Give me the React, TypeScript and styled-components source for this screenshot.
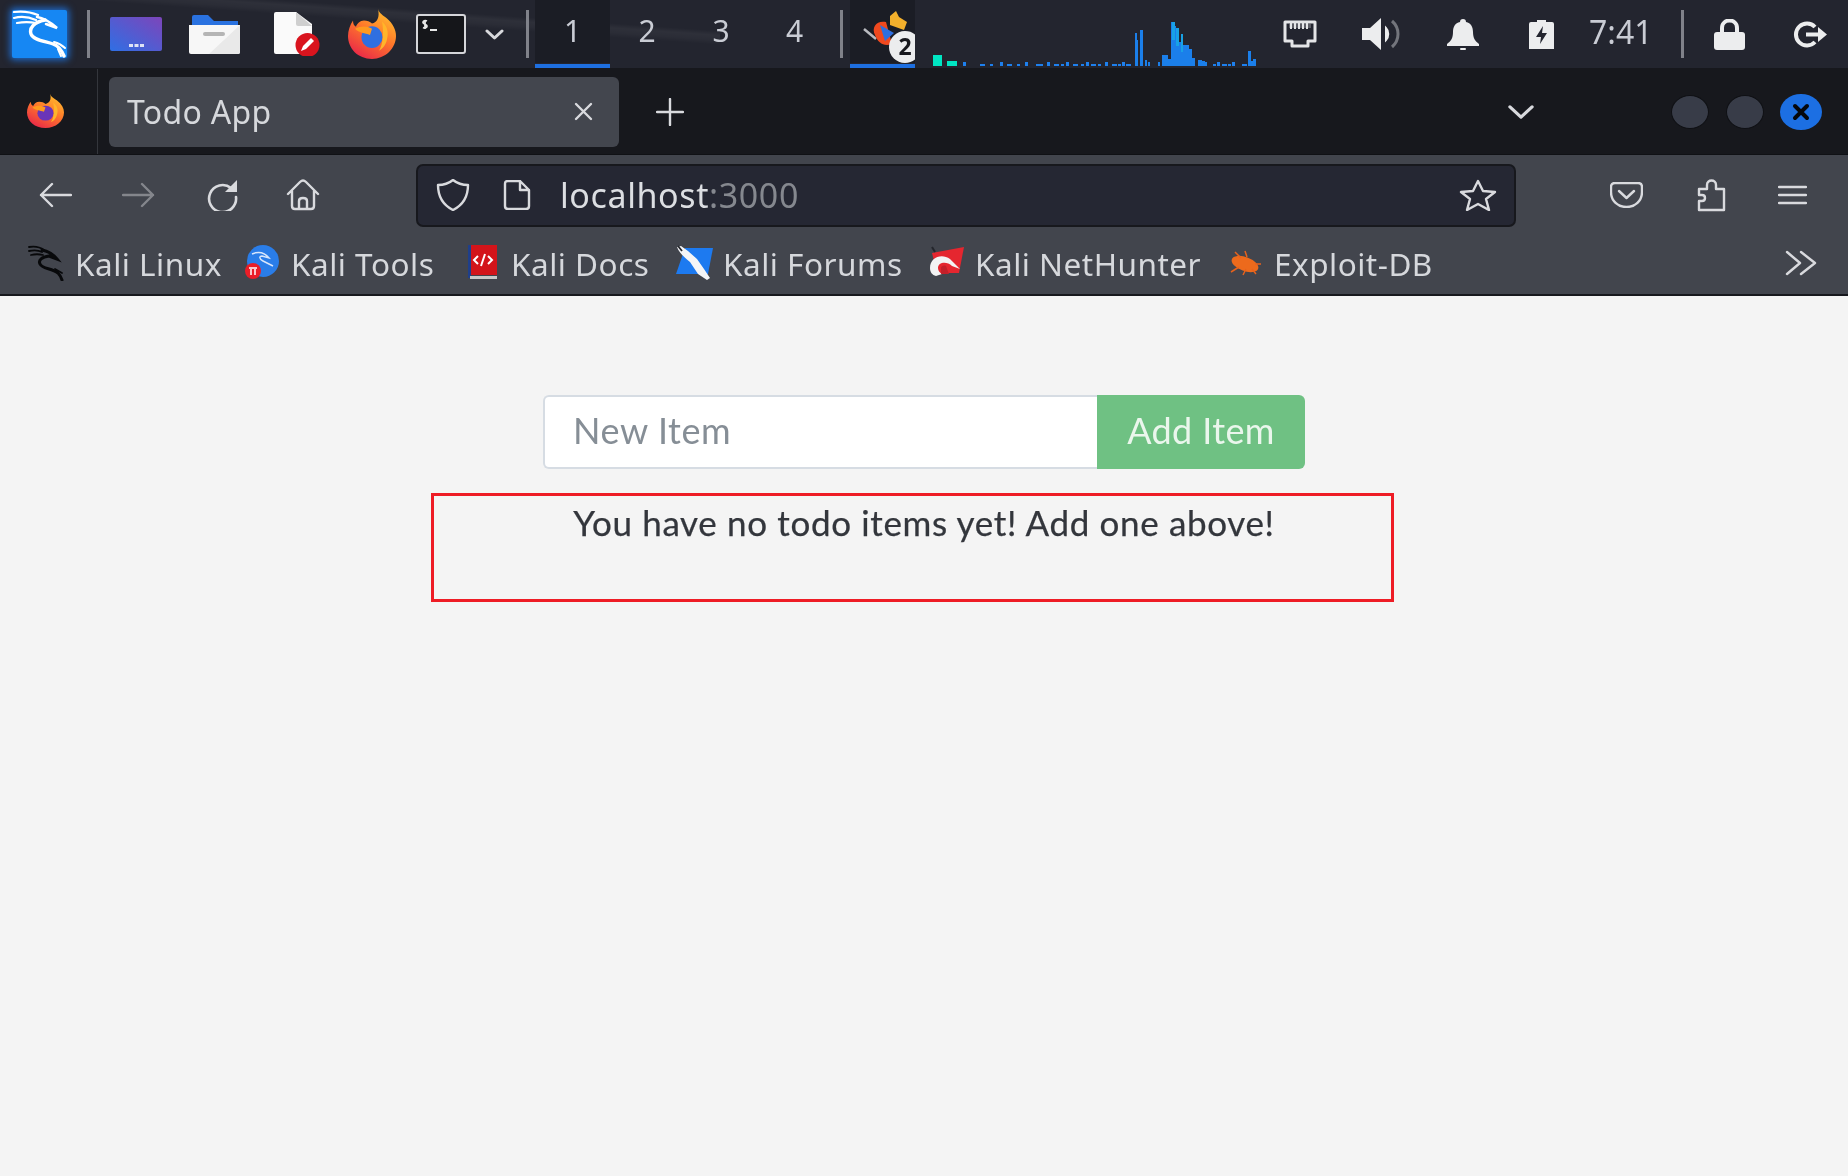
import React from "react";
import styled, { createGlobalStyle } from "styled-components";

const Global = createGlobalStyle`
  html, body { margin: 0; padding: 0; background: #f4f4f4; }
  * { box-sizing: border-box; }
`;

const Screen = styled.div`
  width: 1848px;
  height: 1176px;
  display: flex;
  flex-direction: column;
  overflow: hidden;
  font-family: "Noto Sans", sans-serif;
  filter: blur(0.45px);
`;

const Taskbar = styled.header`
  height: 69px;
  flex: none;
  display: flex;
  align-items: center;
  border-bottom: 1px solid #17181d;
  background:
    linear-gradient(4deg, transparent 62%, rgba(255, 255, 255, 0.035) 66%, rgba(255, 255, 255, 0.05) 70%, transparent 74%) 0 0 / 720px 100% no-repeat,
    #23252f;
`;

const Slot = styled.div<{ $ml?: number; $w: number; $h?: number }>`
  flex: none;
  margin-left: ${(p) => p.$ml ?? 0}px;
  width: ${(p) => p.$w}px;
  height: ${(p) => (p.$h ? `${p.$h}px` : "auto")};
  display: flex;
  align-items: center;
  justify-content: center;
  svg { display: block; flex: none; }
`;

const Divider = styled.div<{ $ml: number }>`
  flex: none;
  margin-left: ${(p) => p.$ml}px;
  width: 3px;
  height: 48px;
  background: #80828a;
`;

const Workspace = styled.div<{ $active?: boolean; $w: number }>`
  flex: none;
  width: ${(p) => p.$w}px;
  height: 68px;
  display: flex;
  align-items: center;
  justify-content: center;
  padding-bottom: 4px;
  font-size: 30px;
  color: #c9ccd4;
  background: ${(p) => (p.$active ? "#1b1d25" : "transparent")};
  border-bottom: 4px solid ${(p) => (p.$active ? "#1e6fe0" : "transparent")};
  box-shadow: inset 0 -1px 0 #23252f;
`;

const TaskButton = styled(Workspace)`
  margin-left: 7px;
  padding: 0;
  align-items: flex-start;
  justify-content: flex-start;
  overflow: hidden;
`;

const Clock = styled.div`
  flex: none;
  margin-left: 35px;
  width: 66px;
  margin-top: -5px;
  font-size: 32px;
  color: #c9ccd4;
  white-space: nowrap;
`;

const TabStrip = styled.div`
  height: 86px;
  flex: none;
  display: flex;
  align-items: center;
  background: #17181d;
  border-bottom: 1px solid #101115;
`;

const StripLogo = styled.div`
  flex: none;
  width: 98px;
  height: 100%;
  padding-left: 27px;
  display: flex;
  align-items: center;
  border-right: 1px solid #34363c;
  svg { margin-top: -2px; }
`;

const Tab = styled.div`
  flex: none;
  margin-left: 11px;
  width: 510px;
  height: 70px;
  padding: 0 26px 0 18px;
  display: flex;
  align-items: center;
  justify-content: space-between;
  border-radius: 6px;
  background: #43464e;
`;

const TabTitle = styled.span`
  font-size: 32px;
  letter-spacing: 0.3px;
  color: #d6d8dc;
`;

const WindowDot = styled.div<{ $ml: number; $close?: boolean }>`
  flex: none;
  margin-left: ${(p) => p.$ml}px;
  width: ${(p) => (p.$close ? 42 : 38)}px;
  height: ${(p) => (p.$close ? 36 : 34)}px;
  border-radius: 50%;
  display: flex;
  align-items: center;
  justify-content: center;
  background: ${(p) => (p.$close ? "#1c6fe3" : "#383c48")};
  border: ${(p) => (p.$close ? "none" : "1px solid #0f1014")};
`;

const Toolbar = styled.nav`
  height: 80px;
  flex: none;
  display: flex;
  align-items: center;
  background: #42454d;
`;

const UrlBar = styled.div`
  flex: none;
  margin-left: 96px;
  width: 1100px;
  height: 63px;
  display: flex;
  align-items: center;
  border: 2px solid #17181d;
  border-radius: 7px;
  background: #252733;
`;

const UrlText = styled.span`
  flex: none;
  margin-left: 29px;
  width: 238px;
  font-size: 34px;
  letter-spacing: 0.6px;
  color: #dcdee2;
  white-space: nowrap;
`;

const UrlPort = styled.span`
  color: #85888f;
`;

const Bookmarks = styled.div`
  height: 61px;
  flex: none;
  display: flex;
  align-items: center;
  padding-bottom: 3px;
  background: #42454d;
  border-bottom: 2px solid #17181d;
`;

const BookmarkLabel = styled.span<{ $ml: number; $w: number }>`
  flex: none;
  margin-left: ${(p) => p.$ml}px;
  width: ${(p) => p.$w}px;
  font-size: 31.5px;
  letter-spacing: 0.5px;
  color: #d6d8dc;
  white-space: nowrap;
`;

const Page = styled.main`
  position: relative;
  flex: 1;
  display: flex;
  flex-direction: column;
  align-items: center;
  padding-top: 99px;
  background: #f4f4f4;
  font-family: Lato, sans-serif;
`;

const AddForm = styled.form`
  width: 762px;
  height: 74px;
  display: flex;
`;

const ItemInput = styled.input`
  flex: 1;
  min-width: 0;
  padding: 0 28px 4px;
  border: 2px solid #d6dce3;
  border-right: none;
  border-radius: 6px 0 0 6px;
  background: #fff;
  font: 400 36px Lato, sans-serif;
  letter-spacing: 0.6px;
  outline: none;
  &::placeholder { color: #868e96; opacity: 1; }
`;

const AddButton = styled.button`
  flex: none;
  width: 208px;
  padding: 0 0 4px;
  border: none;
  border-radius: 0 6px 6px 0;
  background: #6fc183;
  color: #eaf6ec;
  font: 400 36px Lato, sans-serif;
  letter-spacing: 0.4px;
`;

const EmptyMessage = styled.p`
  margin: 30px 0 0;
  font-size: 35px;
  line-height: 46px;
  letter-spacing: 0.65px;
  color: #33363c;
  text-align: center;
  -webkit-text-stroke: 0.25px #33363c;
`;

const Annotation = styled.div`
  position: absolute;
  left: 431px;
  top: 197px;
  width: 963px;
  height: 109px;
  border: 3px solid #ee1c25;
  pointer-events: none;
`;

const Firefox = ({ w, h, core = "#2f6fe0" }: { w: number; h: number; core?: string }) => (
  <svg width={w} height={h} viewBox="0 0 48 48" preserveAspectRatio="none">
    <defs>
      <linearGradient id={`fx${core.slice(1)}`} x1="0.8" y1="0" x2="0.2" y2="1">
        <stop offset="0" stopColor="#ffc22e" />
        <stop offset="0.45" stopColor="#ff7a2a" />
        <stop offset="1" stopColor="#e8234a" />
      </linearGradient>
    </defs>
    <path
      d="M30 0c1 4 5 6 9 9 6 5 9 11 9 17 0 12-11 22-24 22C10 48 0 38 0 26c0-5 2-11 5-15 0 3 1 5 3 6 1-3 4-6 8-6 3 0 6 1 8 3 5-1 8-6 6-14z"
      fill={`url(#fx${core.slice(1)})`}
    />
    <circle cx="24" cy="27" r="10.5" fill={core} />
    <path d="M7 19c6-3 12-3 17 0l-2 6c-5-2-11-2-15-6z" fill="#ff9a1f" />
    <path d="M34 12c5 4 7 10 5 17-1 5-4 9-8 11 4-6 5-18 3-28z" fill="#ffb52a" />
  </svg>
);

const Glow = styled.div`
  width: 55px;
  height: 48px;
  background: #1687f3;
  box-shadow: 0 0 7px 2px rgba(30, 130, 255, 0.75);
  border-radius: 2px;
  svg { display: block; }
`;

const KaliLogo = () => (
  <Glow>
    <svg width="55" height="48" viewBox="0 0 55 48" fill="none" stroke="#fff" strokeLinecap="round">
      <path d="M2 2c8-1 17 0 24 3M2 8c7-2 15-1 22 2M5 13c6-1 13-1 19 0" strokeWidth="2.200" />
      <path d="M25 7c7 1 12 4 20 11l-11-4" strokeWidth="2.600" />
      <path d="M33 10C22 12 17 18 19 24c2 6 13 7 22 10 6 2 9 7 11 12" strokeWidth="3.400" />
      <path d="M42 32c4 1 8 3 11 6M46 39l3 7" strokeWidth="2" />
    </svg>
  </Glow>
);

const AppTile = () => (
  <svg width="52" height="34" viewBox="0 0 52 34">
    <defs>
      <linearGradient id="tile" x1="0" y1="1" x2="1" y2="0">
        <stop offset="0" stopColor="#2f6fe4" />
        <stop offset="1" stopColor="#7d45ba" />
      </linearGradient>
    </defs>
    <rect width="52" height="34" rx="2" fill="url(#tile)" />
    <rect x="19" y="27" width="4" height="3" fill="#dfe3f5" />
    <rect x="24.5" y="27" width="4" height="3" fill="#dfe3f5" />
    <rect x="30" y="27" width="4" height="3" fill="#dfe3f5" />
  </svg>
);

const Folder = () => (
  <svg width="51" height="39" viewBox="0 0 51 39">
    <path d="M3 10V2q0-2 2-2h14l6 6h24v5z" fill="#2a72e0" />
    <path d="M0 10h51v27q0 2-2 2H2q-2 0-2-2z" fill="#f7f7f7" />
    <path d="M20 39 51 10v27q0 2-2 2z" fill="#e9e9e9" />
    <rect x="14" y="17" width="22" height="4" rx="2" fill="#b5b5b5" />
  </svg>
);

const Doc = () => (
  <svg width="47" height="44" viewBox="0 0 47 44">
    <path d="M0 2q0-2 2-2h20l16 12v30H2q-2 0-2-2z" fill="#fafafa" />
    <path d="M22 0l16 14H24q-2 0-2-2z" fill="#cfcfcf" />
    <circle cx="33.5" cy="33" r="12" fill="#d9141e" />
    <path d="M27 39l2-5 8-8 3 3-8 8z" fill="#fff" />
  </svg>
);

const Terminal = () => (
  <svg width="50" height="40" viewBox="0 0 50 40">
    <rect x="1" y="1" width="48" height="38" rx="2" fill="#15161a" stroke="#d5d6da" strokeWidth="2" />
    <path d="M11 7c-2-1-4 0-4 1.500S11 10.500 11 12s-2 2.500-4 1.500M9 6v9" fill="none" stroke="#e8e8e8" strokeWidth="1.800" />
    <rect x="14" y="15" width="7" height="2" fill="#e8e8e8" />
  </svg>
);

const Chevron = ({ w = 19, h = 11, c = "#d8d9dd", sw = 3 }: { w?: number; h?: number; c?: string; sw?: number }) => (
  <svg width={w} height={h} viewBox="0 0 19 11" fill="none" stroke={c} strokeWidth={sw} strokeLinecap="round" strokeLinejoin="round" preserveAspectRatio="none">
    <path d="M2 2l7.500 7L17 2" />
  </svg>
);

const bars: [number, number, number][] = [
  [1135, 33, 2], [1137, 40, 1], [1140, 30, 3], [1145, 60, 2], [1148, 62, 2], [1158, 62, 2], [1162, 55, 6], [1168, 59, 3],
  [1171, 22, 3], [1174, 26, 2], [1176, 28, 3], [1179, 42, 2], [1181, 34, 2], [1183, 45, 3], [1186, 45, 3], [1189, 49, 3],
  [1192, 58, 3], [1198, 60, 4], [1202, 61, 3], [1205, 62, 2], [1248, 51, 3], [1251, 61, 2], [1253, 59, 3],
];
const specks = [963, 980, 990, 1000, 1007, 1017, 1025, 1036, 1040, 1047, 1054, 1061, 1066, 1073, 1081, 1086, 1091, 1098, 1105, 1112, 1118, 1122, 1126, 1213, 1217, 1222, 1228, 1232, 1242];

const LoadGraph = () => (
  <svg width="330" height="68" viewBox="930 0 330 68">
    <rect x="933" y="55" width="9" height="11" fill="#00e6c3" />
    <rect x="947" y="61" width="10" height="5" fill="#00e6c3" />
    {specks.map((x, i) => (
      <rect key={x} x={x} y={i % 3 === 0 ? 62 : 64} width={i % 3 === 1 ? 5 : 3} height={i % 3 === 0 ? 4 : 2} fill="#1e80ee" />
    ))}
    {bars.map(([x, y, w]) => (
      <rect key={x} x={x} y={y} width={w} height={66 - y} fill="#1b7fea" />
    ))}
    {[[1172, 22, 3], [1176, 28, 3], [1181, 34, 2]].map(([x, y, w]) => (
      <rect key={x} x={x} y={y} width={w} height={18} fill="#18a2e6" />
    ))}
  </svg>
);

const TaskIcon = () => (
  <svg width="65" height="64" viewBox="0 0 65 64">
    <path d="M14 29l12 10" stroke="#b9bbc0" strokeWidth="2.500" />
    <path d="M36 22c-9-2-15 5-11 13 3 8 9 12 17 9z" fill="#f0491f" />
    <path d="M30 25l14 8-9 8z" fill="#2f6fe0" />
    <path d="M40 16l6-5 3 6 8 5-3 8-14-5z" fill="#f3b02c" />
    <circle cx="55" cy="47" r="16" fill="#ecedee" />
    <text x="55" y="55" textAnchor="middle" fontFamily="Noto Sans, sans-serif" fontWeight="700" fontSize="23" fill="#17181d">2</text>
  </svg>
);

const Network = () => (
  <svg width="34" height="28" viewBox="0 0 34 28" fill="none" stroke="#e4e5e7">
    <path d="M2 2h30v19h-7v5H9v-5H2z" strokeWidth="3" strokeLinejoin="round" />
    <path d="M8 3v6M12 3v6M16 3v6M20 3v6M24 3v6" strokeWidth="2" />
    <path d="M6 4h22v4H6z" fill="#e4e5e7" stroke="none" opacity="0.3" />
  </svg>
);

const Volume = () => (
  <svg width="40" height="32" viewBox="0 0 40 32">
    <path d="M0 10h8L19 0v32L8 22H0z" fill="#ecedee" />
    <path d="M24 10c3 3 3 9 0 12z" fill="#ecedee" stroke="#ecedee" strokeWidth="2" />
    <path d="M30 3c8 7 8 19 0 26" fill="none" stroke="#73757c" strokeWidth="3" />
  </svg>
);

const Bell = () => (
  <svg width="32" height="31" viewBox="0 0 32 31" fill="#ecedee">
    <path d="M16 0c2 0 3 1 3 3 5 1 7 5 7 10 0 6 2 9 6 12v2H0v-2c4-3 6-6 6-12C6 8 8 4 13 3c0-2 1-3 3-3z" />
    <rect x="13" y="29" width="6" height="2" rx="1" />
  </svg>
);

const Battery = () => (
  <svg width="25" height="29" viewBox="0 0 25 29">
    <path d="M8 0h9v2h6q2 0 2 2v25H0V4q0-2 2-2h6z" fill="#ecedee" />
    <path d="M14 6l-7 11h5l-1 7 7-11h-5z" fill="#23252f" />
  </svg>
);

const Lock = () => (
  <svg width="31" height="31" viewBox="0 0 31 31" fill="none">
    <path d="M8 14V9c0-10 15-10 15 0v5" stroke="#ecedee" strokeWidth="4" />
    <rect y="13" width="31" height="18" rx="3" fill="#ecedee" />
  </svg>
);

const Power = () => (
  <svg width="35" height="27" viewBox="0 0 35 27" fill="none" stroke="#ecedee" strokeWidth="4">
    <path d="M22 6a11 11 0 1 0 0 15" />
    <path d="M13 13.500h15" />
    <path d="M25 6l9 7.500-9 7.500z" fill="#ecedee" stroke="none" />
  </svg>
);

const Line = ({ w, h, vb, d, c = "#d9dade", sw = 2.4 }: { w: number; h: number; vb: string; d: string; c?: string; sw?: number }) => (
  <svg width={w} height={h} viewBox={vb} fill="none" stroke={c} strokeWidth={sw} strokeLinecap="round" strokeLinejoin="round">
    <path d={d} />
  </svg>
);

const Reload = () => (
  <svg width="33" height="32" viewBox="0 0 33 32" fill="none" stroke="#d9dade" strokeWidth="2.600" strokeLinecap="round">
    <path d="M26 9A13.500 13.500 0 1 0 31 18" />
    <path d="M32 1v12H20z" fill="#d9dade" stroke="none" />
  </svg>
);

const BmDragon = () => (
  <svg width="36" height="36" viewBox="0 0 36 36" fill="none" stroke="#08090b" strokeLinecap="round">
    <path d="M1 2c6-1 11 0 15 3M1 6c5-1 9-1 13 1M3 10c4-1 8-1 12 0" strokeWidth="1.800" />
    <path d="M14 5c5 1 10 3 15 9l-8-3C14 12 10 15 12 19c2 5 12 4 18 9 2 2 3 4 4 7" strokeWidth="3" />
    <path d="M27 24l7 4" strokeWidth="1.800" />
  </svg>
);

const BmTools = () => (
  <svg width="34" height="36" viewBox="0 0 34 36">
    <circle cx="18" cy="16" r="16" fill="#2a7de8" />
    <path d="M7 9c7-3 13-1 17 4l-7-2c-3 0-3 3 1 5l10 5" fill="none" stroke="#d8e6fb" strokeWidth="1.500" />
    <circle cx="8" cy="26" r="8" fill="#ea1d27" />
    <path d="M4 23h8M6 24v6M10 24v6" stroke="#fff" strokeWidth="1.500" />
  </svg>
);

const BmDocs = () => (
  <svg width="29" height="36" viewBox="0 0 29 36">
    <rect x="2" y="0" width="27" height="30" fill="#d3141a" />
    <rect x="0" y="0" width="3" height="33" fill="#1f3f8a" />
    <rect x="2" y="31" width="27" height="3" fill="#c8c8c8" />
    <path d="M10 11l-4 4 4 4M20 11l4 4-4 4M17 9l-4 12" fill="none" stroke="#fff" strokeWidth="2" />
  </svg>
);

const BmForums = () => (
  <svg width="37" height="36" viewBox="0 0 37 36">
    <path d="M9 3h28l-5 26H0z" fill="#1d7af0" />
    <path d="M1 2l4-1 7 5 9 8 7 10 6 9-3 2-9-6-8-12C9 13 3 8 1 2z" fill="#f4f5f7" />
    <path d="M2 1l4 5" stroke="#24262c" strokeWidth="1.800" />
  </svg>
);

const BmHunter = () => (
  <svg width="36" height="34" viewBox="0 0 36 34">
    <path d="M4 7l32-6-5 26H9z" fill="#e5262f" />
    <path d="M2 22C2 11 14 7 22 13l10 10-8-3c-5-5-14-4-14 2 0 3 2 5 4 6l-6 2c-4-1-6-4-6-8z" fill="#f3f3f3" />
    <path d="M13 22c0-2 3-3 5-2l3 8h-8z" fill="#c3202a" />
    <path d="M4 1l3 5" stroke="#24262c" strokeWidth="2" />
  </svg>
);

const BmBug = () => (
  <svg width="36" height="26" viewBox="0 0 36 26" fill="none" stroke="#e8621c" strokeWidth="1.500">
    <ellipse cx="18" cy="14" rx="14" ry="7" transform="rotate(20 18 14)" fill="#ed6a1c" stroke="none" />
    <path d="M8 2l6 6M18 1l2 6M4 22l8-5M16 25l3-6M29 24l-4-5M34 14h-6" />
  </svg>
);

export default function App() {
  return (
    <>
      <Global />
      <Screen>
        <Taskbar>
          <Slot $ml={12} $w={55}><KaliLogo /></Slot>
          <Divider $ml={20} />
          <Slot $ml={20} $w={52}><AppTile /></Slot>
          <Slot $ml={27} $w={51}><Folder /></Slot>
          <Slot $ml={34} $w={47}><Doc /></Slot>
          <Slot $ml={27} $w={48}><Firefox w={48} h={50} /></Slot>
          <Slot $ml={20} $w={50}><Terminal /></Slot>
          <Slot $ml={19} $w={19}><Chevron /></Slot>
          <Divider $ml={22} />
          <Slot $ml={6} $w={75}><Workspace $active $w={75}>1</Workspace></Slot>
          <Workspace $w={74}>2</Workspace>
          <Workspace $w={74}>3</Workspace>
          <Workspace $w={73}>4</Workspace>
          <Divider $ml={9} />
          <TaskButton $active $w={65}><TaskIcon /></TaskButton>
          <Slot $ml={15} $w={330}><LoadGraph /></Slot>
          <Slot $ml={23} $w={34}><Network /></Slot>
          <Slot $ml={45} $w={40}><Volume /></Slot>
          <Slot $ml={45} $w={32}><Bell /></Slot>
          <Slot $ml={50} $w={25}><Battery /></Slot>
          <Clock>7:41</Clock>
          <Divider $ml={26} />
          <Slot $ml={30} $w={31}><Lock /></Slot>
          <Slot $ml={48} $w={35}><Power /></Slot>
        </Taskbar>

        <TabStrip>
          <StripLogo><Firefox w={37} h={34} core="#6a35b8" /></StripLogo>
          <Tab>
            <TabTitle>Todo App</TabTitle>
            <Line w={19} h={19} vb="0 0 19 19" d="M2 2l15 15M17 2L2 17" />
          </Tab>
          <Slot $ml={37} $w={28}><Line w={28} h={28} vb="0 0 28 28" d="M14 1v26M1 14h26" /></Slot>
          <Slot $ml={823} $w={28}><Chevron w={28} h={16} sw={2.200} /></Slot>
          <WindowDot $ml={136} />
          <WindowDot $ml={17} />
          <WindowDot $ml={16} $close>
            <Line w={18} h={18} vb="0 0 18 18" d="M3 3l12 12M15 3L3 15" c="#05070c" sw={4} />
          </WindowDot>
        </TabStrip>

        <Toolbar>
          <Slot $ml={39} $w={33}><Line w={33} h={26} vb="0 0 33 26" d="M32 13H2M13 2L2 13l11 11" /></Slot>
          <Slot $ml={50} $w={33}><Line w={33} h={26} vb="0 0 33 26" d="M1 13h30M20 2l11 11-11 11" c="#84868c" /></Slot>
          <Slot $ml={50} $w={33}><Reload /></Slot>
          <Slot $ml={48} $w={34}><Line w={34} h={32} vb="0 0 34 32" d="M2 15L14 3q3-3 6 0l12 12M6 12v15q0 3 3 3h16q3 0 3-3V12M13 30v-8q0-3 4-3t4 3v8" /></Slot>
          <UrlBar>
            <Slot $ml={18} $w={34}><Line w={34} h={32} vb="0 0 34 32" d="M17 1C12 5 7 6 2 6c0 12 5 20 15 25 10-5 15-13 15-25-5 0-10-1-15-5z" /></Slot>
            <Slot $ml={33} $w={28}><Line w={28} h={30} vb="0 0 28 30" d="M17 1H5Q2 1 2 4v22q0 3 3 3h18q3 0 3-3V10zM17 1v9h9" /></Slot>
            <UrlText>localhost<UrlPort>:3000</UrlPort></UrlText>
            <Slot $ml={661} $w={38}><Line w={38} h={32} vb="0 0 38 32" d="M19 2l5 10 12 1-9 7 3 11-11-6-11 6 3-11-9-7 12-1z" /></Slot>
          </UrlBar>
          <Slot $ml={94} $w={33}><Line w={33} h={26} vb="0 0 33 26" d="M5 1h23q4 0 4 4v5c0 9-7 15-15.500 15S1 19 1 10V5q0-4 4-4zM9 9l7.500 7L24 9" /></Slot>
          <Slot $ml={52} $w={31}><Line w={31} h={33} vb="0 0 31 33" d="M12 10V6c0-6 9-6 9 0v4h8v21H4v-9h3c4 0 4-6 0-6H4v-6z" /></Slot>
          <Slot $ml={52} $w={29}><Line w={29} h={20} vb="0 0 29 20" d="M1 2h27M1 10h27M1 18h27" /></Slot>
        </Toolbar>

        <Bookmarks>
          <Slot $ml={28} $w={36}><BmDragon /></Slot>
          <BookmarkLabel $ml={11} $w={141}>Kali Linux</BookmarkLabel>
          <Slot $ml={29} $w={34}><BmTools /></Slot>
          <BookmarkLabel $ml={12} $w={145}>Kali Tools</BookmarkLabel>
          <Slot $ml={32} $w={29}><BmDocs /></Slot>
          <BookmarkLabel $ml={14} $w={137}>Kali Docs</BookmarkLabel>
          <Slot $ml={28} $w={37}><BmForums /></Slot>
          <BookmarkLabel $ml={10} $w={177}>Kali Forums</BookmarkLabel>
          <Slot $ml={28} $w={36}><BmHunter /></Slot>
          <BookmarkLabel $ml={11} $w={223}>Kali NetHunter</BookmarkLabel>
          <Slot $ml={29} $w={36}><BmBug /></Slot>
          <BookmarkLabel $ml={11} $w={163}>Exploit-DB</BookmarkLabel>
          <Slot $ml={348} $w={32}><Line w={32} h={26} vb="0 0 32 26" d="M2 2l13 11L2 24M16 2l14 11-14 11" /></Slot>
        </Bookmarks>

        <Page>
          <AddForm onSubmit={(e) => e.preventDefault()}>
            <ItemInput placeholder="New Item" />
            <AddButton type="button">Add Item</AddButton>
          </AddForm>
          <EmptyMessage>You have no todo items yet! Add one above!</EmptyMessage>
          <Annotation />
        </Page>
      </Screen>
    </>
  );
}
